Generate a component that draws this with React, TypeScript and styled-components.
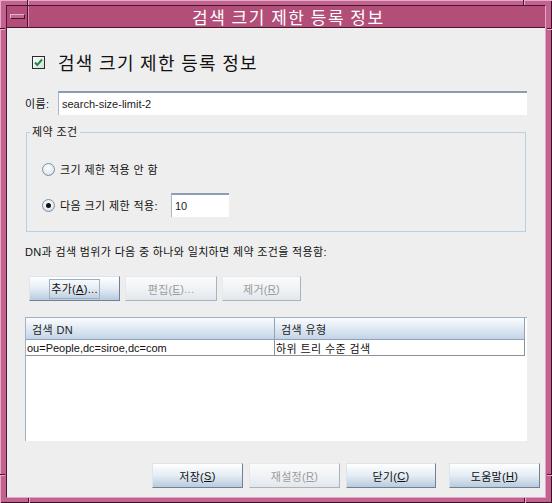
import React from "react";
import styled, { createGlobalStyle, css } from "styled-components";

const Global = createGlobalStyle`
  html, body { margin: 0; padding: 0; background: #ffffff; }
  body {
    font-family: "Liberation Sans", "Noto Sans CJK KR", sans-serif;
    font-size: 11px;
    color: #111;
  }
`;

const KR = `"Liberation Sans", "Noto Sans CJK KR", sans-serif`;

const Window = styled.div`
  position: relative;
  width: 552px;
  height: 503px;
  box-sizing: border-box;
  padding: 5px 6px 5px 6px;
  background: #c2628e;
  box-shadow: inset 1px 1px 0 #e8abc7, inset -1px -1px 0 #3d0f26;
  display: flex;
`;

const Inner = styled.div`
  flex: 1;
  display: flex;
  flex-direction: column;
  border-top: 1px solid #4a1531;
  border-left: 1px solid #4a1531;
  border-right: 1px solid #e4a6c2;
  border-bottom: 1px solid #e4a6c2;
`;

const FrameMark = styled.span<{ $v?: boolean }>`
  position: absolute;
  background: #4a1531;
  box-shadow: ${(p) => (p.$v ? "1px 0 0 #e8abc7" : "0 1px 0 #e8abc7")};
  ${(p) => (p.$v ? css`width: 1px; height: 5px;` : css`width: 5px; height: 1px;`)}
`;

const TitleBar = styled.div`
  height: 21px;
  display: flex;
  background: #b24e78;
  border-bottom: 1px solid #4a1531;
`;

const MinBox = styled.div`
  width: 20px;
  flex: none;
  display: flex;
  align-items: center;
  justify-content: center;
  border-right: 1px solid #4a1531;
  box-shadow: 1px 0 0 #d98bb0;
`;

const MinGlyph = styled.span`
  width: 13px;
  height: 3px;
  border-top: 1px solid #eaaecb;
  border-left: 1px solid #eaaecb;
  border-bottom: 1px solid #4a1531;
  border-right: 1px solid #4a1531;
  background: #c06890;
`;

const Title = styled.div`
  flex: 1;
  padding-left: 164px;
  white-space: nowrap;
  color: #ffffff;
  font-family: "Noto Sans CJK KR", sans-serif;
  font-size: 17px;
  letter-spacing: 1.5px;
  line-height: 21px;
`;

const Content = styled.div`
  flex: 1;
  background: #eeeeee;
  padding: 20px 18px 0 18px;
  display: flex;
  flex-direction: column;
`;

const HeadingRow = styled.div`
  height: 28px;
  display: flex;
  align-items: center;
  gap: 13px;
  padding-left: 7px;
`;

const Heading = styled.div`
  font-family: "Noto Sans CJK KR", sans-serif;
  font-size: 18px;
  letter-spacing: 1.3px;
  line-height: 28px;
  color: #111;
`;

const NameRow = styled.div`
  margin-top: 15px;
  height: 24px;
  display: flex;
  align-items: center;
`;

const Label = styled.span`
  width: 33px;
  font-family: ${KR};
  letter-spacing: 0.4px;
`;

const TextInput = styled.div<{ $w?: number }>`
  box-sizing: border-box;
  height: 24px;
  ${(p) => (p.$w ? css`width: ${p.$w}px;` : css`flex: 1;`)}
  background: #ffffff;
  border-top: 2px solid #8a9db2;
  border-left: 1px solid #a9b8c8;
  display: flex;
  align-items: center;
  padding-left: 3px;
  font-family: ${KR};
  font-size: 11px;
  letter-spacing: 0;
  color: #222;
`;

const Group = styled.fieldset`
  margin: 10px 1px 0 1px;
  padding: 18px 0 14px 3px;
  border: 1px solid #b8cfe6;
  display: flex;
  flex-direction: column;
  gap: 12px;
`;

const Legend = styled.legend`
  padding: 0 2px;
  line-height: 14px;
  font-family: ${KR};
  letter-spacing: 0.4px;
`;

const OptionRow = styled.div`
  height: 24px;
  display: flex;
  align-items: center;
  padding-left: 12px;
  font-family: ${KR};
  letter-spacing: 0.4px;
`;

const RadioDot = styled.span<{ $on?: boolean }>`
  box-sizing: border-box;
  width: 13px;
  height: 13px;
  border-radius: 50%;
  border: 1px solid #7d8ea0;
  background: radial-gradient(circle at 45% 35%, #ffffff 0%, #e6edf4 55%, #bccadb 100%);
  margin-right: 5px;
  display: flex;
  align-items: center;
  justify-content: center;
  &::after {
    content: "";
    width: 5px;
    height: 5px;
    border-radius: 50%;
    background: ${(p) => (p.$on ? "#111" : "transparent")};
  }
`;

const Desc = styled.div`
  margin-top: 13px;
  line-height: 14px;
  font-family: ${KR};
  letter-spacing: 0.35px;
`;

const ButtonRow = styled.div`
  margin-top: 17px;
  padding-left: 4px;
  display: flex;
  gap: 5px;
`;

const Button = styled.div<{ $w: number; $disabled?: boolean }>`
  box-sizing: border-box;
  width: ${(p) => p.$w}px;
  height: 25px;
  display: flex;
  align-items: center;
  justify-content: center;
  font-family: ${KR};
  font-size: 11px;
  letter-spacing: 0.3px;
  border: 1px solid;
  ${(p) =>
    p.$disabled
      ? css`
          color: #9b9b9b;
          background: linear-gradient(#fbfbfb, #eef1f4 60%, #e2e7ec);
          border-color: #e6e9ec #a7b3bf #a7b3bf #e6e9ec;
        `
      : css`
          color: #111;
          background: linear-gradient(#ffffff, #e4ecf4 50%, #b9cbdd);
          border-color: #dde4ec #6e8196 #6e8196 #dde4ec;
        `}
`;

const Focus = styled.span`
  border: 1px solid #9fb0c2;
  padding: 2px 1px;
  line-height: 14px;
`;

const Pane = styled.div`
  margin-top: 16px;
  height: 123px;
  background: #ffffff;
  border-top: 1px solid #9fb3c8;
  border-left: 1px solid #9fb3c8;
  display: flex;
  flex-direction: column;
`;

const Grid = styled.div`
  width: 500px;
  display: grid;
  grid-template-columns: 249px 250px;
  font-family: ${KR};
`;

const HeadCell = styled.div`
  height: 21px;
  display: flex;
  align-items: center;
  padding-left: 6px;
  letter-spacing: 0.4px;
  background: linear-gradient(#fbfdff, #e2ebf4 45%, #c3d4e7);
  border-right: 1px solid #8ea3b9;
  border-bottom: 1px solid #8ea3b9;
  color: #222;
`;

const Cell = styled.div<{ $kr?: boolean }>`
  height: 15px;
  display: flex;
  align-items: center;
  padding-left: 1px;
  letter-spacing: ${(p) => (p.$kr ? "0.4px" : "0")};
  border-right: 1px solid #8c9198;
  border-bottom: 1px solid #8c9198;
  color: #111;
`;

const BottomBar = styled.div`
  margin-top: 22px;
  margin-right: -13px;
  display: flex;
  justify-content: flex-end;
  gap: 6px;
  & > :last-child {
    margin-left: 7px;
  }
`;

const CheckIcon = () => (
  <svg width="13" height="13" viewBox="0 0 13 13">
    <defs>
      <linearGradient id="cb" x1="0" y1="0" x2="1" y2="1">
        <stop offset="0" stopColor="#ffffff" />
        <stop offset="1" stopColor="#cfe0d8" />
      </linearGradient>
    </defs>
    <rect x="0.5" y="0.5" width="12" height="12" fill="url(#cb)" stroke="#2b2b2b" />
    <path d="M3 6.5 L5.3 9 L10 3.5" fill="none" stroke="#1f8a45" strokeWidth="2" />
  </svg>
);

export default function App() {
  return (
    <>
      <Global />
      <Window>
        <FrameMark $v style={{ left: 27, top: 0 }} />
        <FrameMark $v style={{ left: 523, top: 0 }} />
        <FrameMark $v style={{ left: 28, bottom: 0 }} />
        <FrameMark $v style={{ left: 524, bottom: 0 }} />
        <FrameMark style={{ left: 0, top: 28 }} />
        <FrameMark style={{ right: 0, top: 28 }} />
        <FrameMark style={{ left: 0, top: 474 }} />
        <FrameMark style={{ right: 0, top: 474 }} />
        <Inner>
          <TitleBar>
            <MinBox>
              <MinGlyph />
            </MinBox>
            <Title>검색 크기 제한 등록 정보</Title>
          </TitleBar>
          <Content>
            <HeadingRow>
              <CheckIcon />
              <Heading>검색 크기 제한 등록 정보</Heading>
            </HeadingRow>
            <NameRow>
              <Label>이름:</Label>
              <TextInput>search-size-limit-2</TextInput>
            </NameRow>
            <Group>
              <Legend>제약 조건</Legend>
              <OptionRow>
                <RadioDot />
                크기 제한 적용 안 함
              </OptionRow>
              <OptionRow>
                <RadioDot $on />
                다음 크기 제한 적용:
                <TextInput $w={58} style={{ marginLeft: 13 }}>
                  10
                </TextInput>
              </OptionRow>
            </Group>
            <Desc>DN과 검색 범위가 다음 중 하나와 일치하면 제약 조건을 적용함:</Desc>
            <ButtonRow>
              <Button $w={91}>
                <Focus>
                  추가(<u>A</u>)...
                </Focus>
              </Button>
              <Button $w={92} $disabled>
                편집(<u>E</u>)...
              </Button>
              <Button $w={79} $disabled>
                제거(<u>R</u>)
              </Button>
            </ButtonRow>
            <Pane>
              <Grid>
                <HeadCell>검색 DN</HeadCell>
                <HeadCell>검색 유형</HeadCell>
                <Cell>ou=People,dc=siroe,dc=com</Cell>
                <Cell $kr>하위 트리 수준 검색</Cell>
              </Grid>
            </Pane>
            <BottomBar>
              <Button $w={91}>
                저장(<u>S</u>)
              </Button>
              <Button $w={91} $disabled>
                재설정(<u>R</u>)
              </Button>
              <Button $w={90}>
                닫기(<u>C</u>)
              </Button>
              <Button $w={91}>
                도움말(<u>H</u>)
              </Button>
            </BottomBar>
          </Content>
        </Inner>
      </Window>
    </>
  );
}
